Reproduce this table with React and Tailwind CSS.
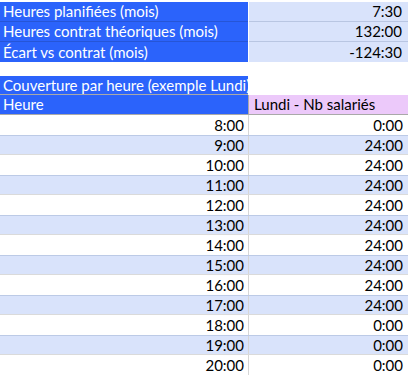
import React from 'react';

const summary = [
  ['Heures planifiées (mois)', '7:30'],
  ['Heures contrat théoriques (mois)', '132:00'],
  ['Écart vs contrat (mois)', '-124:30'],
];

const coverage = [
  ['8:00', '0:00'],
  ['9:00', '24:00'],
  ['10:00', '24:00'],
  ['11:00', '24:00'],
  ['12:00', '24:00'],
  ['13:00', '24:00'],
  ['14:00', '24:00'],
  ['15:00', '24:00'],
  ['16:00', '24:00'],
  ['17:00', '24:00'],
  ['18:00', '0:00'],
  ['19:00', '0:00'],
  ['20:00', '0:00'],
];

const App = () => {
  return (
    <div className="w-[414px] h-[379px] overflow-hidden bg-white pt-[2px] font-['Lato','Open_Sans',sans-serif] text-[15px] leading-none text-black">
      {/* résumé mensuel */}
      <div className="w-[408px]">
        {summary.map(([label, value], i) => (
          <div key={label} className="grid grid-cols-[248px_1px_159px] h-[20px]">
            <div
              className={`bg-[#2b63fb] text-white flex items-center pl-[3px] ${
                i < 2 ? 'border-b border-[#2655d6]' : ''
              }`}
            >
              {label}
            </div>
            <div className="bg-white" />
            <div
              className={`bg-[#d9e3fb] flex items-center justify-end pr-[6px] ${
                i < 2 ? 'border-b border-[#b9c6e2]' : ''
              }`}
            >
              {value}
            </div>
          </div>
        ))}
      </div>

      <div className="h-[14px]" />

      {/* couverture par heure */}
      <div className="w-[408px]">
        <div className="grid grid-cols-[248px_160px] h-[19px]">
          <div className="bg-[#2b63fb] text-white flex items-center pl-[3px] whitespace-nowrap border-b border-[#a9a9a9]">
            Couverture par heure (exemple Lundi)
          </div>
          <div />
        </div>
        <div className="grid grid-cols-[248px_160px] h-[20px] border-b border-[#a9a9a9]">
          <div className="bg-[#2b63fb] text-white flex items-center pl-[3px]">Heure</div>
          <div className="bg-[#ecc9fa] flex items-center pl-[5px] border-l border-[#a9a9a9]">
            Lundi - Nb salariés
          </div>
        </div>
        {coverage.map(([hour, count], i) => {
          const odd = i % 2 === 1;
          return (
            <div
              key={hour}
              className={`grid grid-cols-[248px_160px] h-[20px] ${
                odd ? 'bg-[#d9e3fb] border-t border-[#bccae6] border-b border-b-[#dadada]' : 'bg-white'
              }`}
            >
              <div className="flex items-center justify-end pr-[4px]">{hour}</div>
              <div className="flex items-center justify-end pr-[5px] border-l border-[#d6d6d6]">{count}</div>
            </div>
          );
        })}
      </div>
    </div>
  );
};

export default App;
